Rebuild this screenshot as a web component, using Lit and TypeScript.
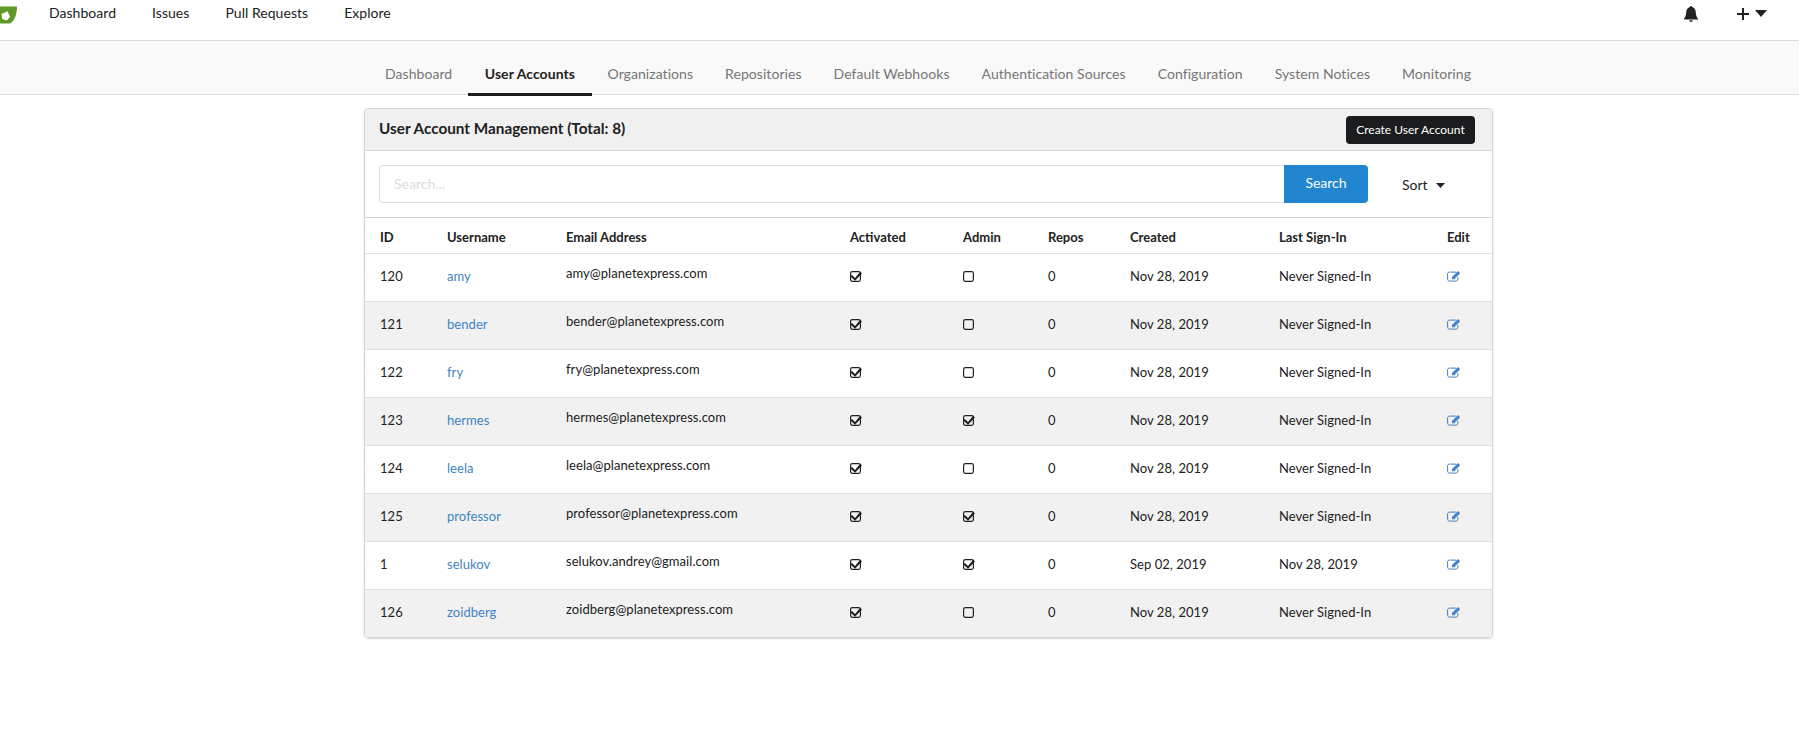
import { LitElement, html, css, svg } from "lit";
import { customElement } from "lit/decorators.js";

const users = [
  [120, "amy", "amy@planetexpress.com", 1, 0, "Nov 28, 2019", "Never Signed-In"],
  [121, "bender", "bender@planetexpress.com", 1, 0, "Nov 28, 2019", "Never Signed-In"],
  [122, "fry", "fry@planetexpress.com", 1, 0, "Nov 28, 2019", "Never Signed-In"],
  [123, "hermes", "hermes@planetexpress.com", 1, 1, "Nov 28, 2019", "Never Signed-In"],
  [124, "leela", "leela@planetexpress.com", 1, 0, "Nov 28, 2019", "Never Signed-In"],
  [125, "professor", "professor@planetexpress.com", 1, 1, "Nov 28, 2019", "Never Signed-In"],
  [1, "selukov", "selukov.andrey@gmail.com", 1, 1, "Sep 02, 2019", "Nov 28, 2019"],
  [126, "zoidberg", "zoidberg@planetexpress.com", 1, 0, "Nov 28, 2019", "Never Signed-In"],
] as const;

const topLinks = ["Dashboard", "Issues", "Pull Requests", "Explore"];
const tabs = ["Dashboard", "User Accounts", "Organizations", "Repositories", "Default Webhooks", "Authentication Sources", "Configuration", "System Notices", "Monitoring"];
const cols = ["ID", "Username", "Email Address", "Activated", "Admin", "Repos", "Created", "Last Sign-In", "Edit"];

const box = (checked: number) => html`<svg class="check" viewBox="0 0 12 12" width="12" height="12">
  <rect x="0.6" y="1.6" width="9.8" height="9.8" rx="1.8" fill="none" stroke="#212121" stroke-width="1.2"></rect>
  ${checked ? svg`<path d="M2 5l3 3 5.200-6.200 1.800 1.800-7 7.200-4.600-4.400z" fill="#212121"></path>` : ""}
</svg>`;

const edit = html`<svg class="edit" viewBox="0 0 14 12" width="14" height="12">
  <path d="M10.800 7.200v2c0 1.100-.8 1.900-1.800 1.900H2.500C1.400 11.100.6 10.300.6 9.200V4c0-1 .8-1.900 1.900-1.900h6.800" fill="none" stroke="#4183c4" stroke-width="1"></path>
  <path d="M5 7L11 1l2.200 2.200-6 6H5z" fill="#4183c4"></path>
</svg>`;

@customElement("app-root")
export class AppRoot extends LitElement {
  static styles = css`
    :host { display: block; min-height: 756px; background: #fff; color: #212121; font-family: Lato, "Liberation Sans", sans-serif; font-size: 14px; line-height: 20px; }
    * { box-sizing: border-box; }
    .top { height: 41px; border-bottom: 1px solid #ddd; display: flex; align-items: flex-start; }
    .logo { flex: none; width: 17px; height: 18px; margin-top: 6px; margin-right: 32px; display: block; }
    .toplinks { display: flex; gap: 36px; padding-top: 3px; flex: 1; letter-spacing: .04px; }
    .right { display: flex; align-items: flex-start; padding: 6px 32px 0 0; }
    .bell { display: block; margin-right: 37px; }
    .plus { display: block; margin: 1px 5px 0 0; }
    .caret { display: block; margin-top: 4px; }
    .sub { height: 54px; background: #f9f9f9; border-bottom: 1px solid #ddd; display: flex; padding-left: 369px; }
    .tab { height: 54px; padding: 23px 16px 0; letter-spacing: .06px; color: #767676; border-bottom: 3px solid transparent; }
    .tab.active { color: #212121; font-weight: 700; border-bottom-color: #1b1c1d; height: 55px; padding: 23px 16.5px 0; }
    .panel { margin: 13px 0 0 364px; width: 1129px; border: 1px solid #d4d4d5; border-radius: 4px; box-shadow: 0 1px 2px rgba(34,36,38,.15); overflow: hidden; }
    .head { height: 42px; background: #f0f0f0; border-bottom: 1px solid #d4d4d5; display: flex; align-items: center; justify-content: space-between; padding: 0 17px 0 14px; font-size: 15.3px; font-weight: 700; }
    .head span { padding-bottom: 4px; }
    .create { height: 28px; width: 129px; border: 0; border-radius: 4px; background: #1b1c1d; color: #fff; font: 400 12px Lato, sans-serif; padding: 0; }
    .searchrow { height: 67px; display: flex; align-items: flex-start; padding: 14px 0 0 14px; border-bottom: 1px solid #d4d4d5; }
    .input { width: 905px; height: 38px; border: 1px solid #dedede; border-right: 0; border-radius: 4px 0 0 4px; color: #dcdcdc; padding: 8px 14px; }
    .search { width: 84px; height: 38px; background: #2185d0; color: #fff; border-radius: 0 4px 4px 0; text-align: center; padding-top: 8px; }
    .sort { display: flex; align-items: center; padding: 10px 0 0 34px; }
    .sort svg { margin-left: 8px; display: block; }
    table { width: 1127px; table-layout: fixed; border-collapse: collapse; font-size: 13px; }
    th, td { padding: 0 0 0 15px; text-align: left; vertical-align: middle; white-space: nowrap; }
    th { height: 35px; font-weight: 700; border-bottom: 1px solid #e2e2e2; padding-top: 3px; }
    td { height: 48px; border-top: 1px solid #ddd; padding-bottom: 2px; letter-spacing: .05px; }
    tr:first-child td { border-top: 0; }
    tbody tr:nth-child(even) { background: #f1f1f1; }
    th:nth-child(1) { width: 67px; }
    th:nth-child(2) { width: 119px; }
    th:nth-child(3) { width: 284px; }
    th:nth-child(4) { width: 113px; }
    th:nth-child(5) { width: 85px; }
    th:nth-child(6) { width: 82px; }
    th:nth-child(7) { width: 149px; }
    th:nth-child(8) { width: 168px; }
    td.email { padding-bottom: 8px; }
    a { color: #4183c4; text-decoration: none; }
    .check, .edit { display: block; }
  `;

  render() {
    return html`
      <div class="top">
        <svg class="logo" viewBox="0 0 17 18">
          <path d="M0 0.500H17C17 7 15 15 10 17.500H0z" fill="#609926"></path>
          <path d="M0 0H17V1H0z" fill="#a9c98a"></path>
          <path d="M1.500 8l6-2.700 2.500 5.500-3 3.800-4.800-1.600z" fill="#fff"></path>
        </svg>
        <div class="toplinks">${topLinks.map((l) => html`<span>${l}</span>`)}</div>
        <div class="right">
          <svg class="bell" width="16" height="16" viewBox="0 0 16 16">
            <path d="M8 0c.7 0 1.100.5 1.100 1.100C11.500 1.700 12.600 3.800 12.800 6.500c.2 3 .8 4.600 2.200 6.200v.8H1v-.8C2.400 11.100 3 9.500 3.200 6.500 3.400 3.800 4.500 1.700 6.900 1.100 6.900.5 7.300 0 8 0z" fill="#212121"></path>
            <path d="M6.200 14.300h3.600C9.600 15.400 8.900 16 8 16s-1.600-.6-1.800-1.700z" fill="#212121"></path>
          </svg>
          <svg class="plus" width="14" height="14" viewBox="0 0 14 14"><path d="M6 1h2v5h5v2H8v5H6V8H1V6h5z" fill="#212121"></path></svg>
          <svg class="caret" width="12" height="7" viewBox="0 0 12 7"><path d="M0 0h12L6 7z" fill="#212121"></path></svg>
        </div>
      </div>
      <div class="sub">
        ${tabs.map((t) => html`<div class="tab ${t === "User Accounts" ? "active" : ""}">${t}</div>`)}
      </div>
      <div class="panel">
        <div class="head"><span>User Account Management (Total: 8)</span><button class="create">Create User Account</button></div>
        <div class="searchrow">
          <div class="input">Search...</div>
          <div class="search">Search</div>
          <div class="sort">Sort <svg width="9" height="5" viewBox="0 0 9 5"><path d="M0 0h9L4.500 5z" fill="#212121"></path></svg></div>
        </div>
        <table>
          <thead><tr>${cols.map((c) => html`<th>${c}</th>`)}</tr></thead>
          <tbody>
            ${users.map((u) => html`<tr>
              <td>${u[0]}</td>
              <td><a>${u[1]}</a></td>
              <td class="email">${u[2]}</td>
              <td>${box(u[3])}</td>
              <td>${box(u[4])}</td>
              <td>0</td>
              <td>${u[5]}</td>
              <td>${u[6]}</td>
              <td>${edit}</td>
            </tr>`)}
          </tbody>
        </table>
      </div>
    `;
  }
}
